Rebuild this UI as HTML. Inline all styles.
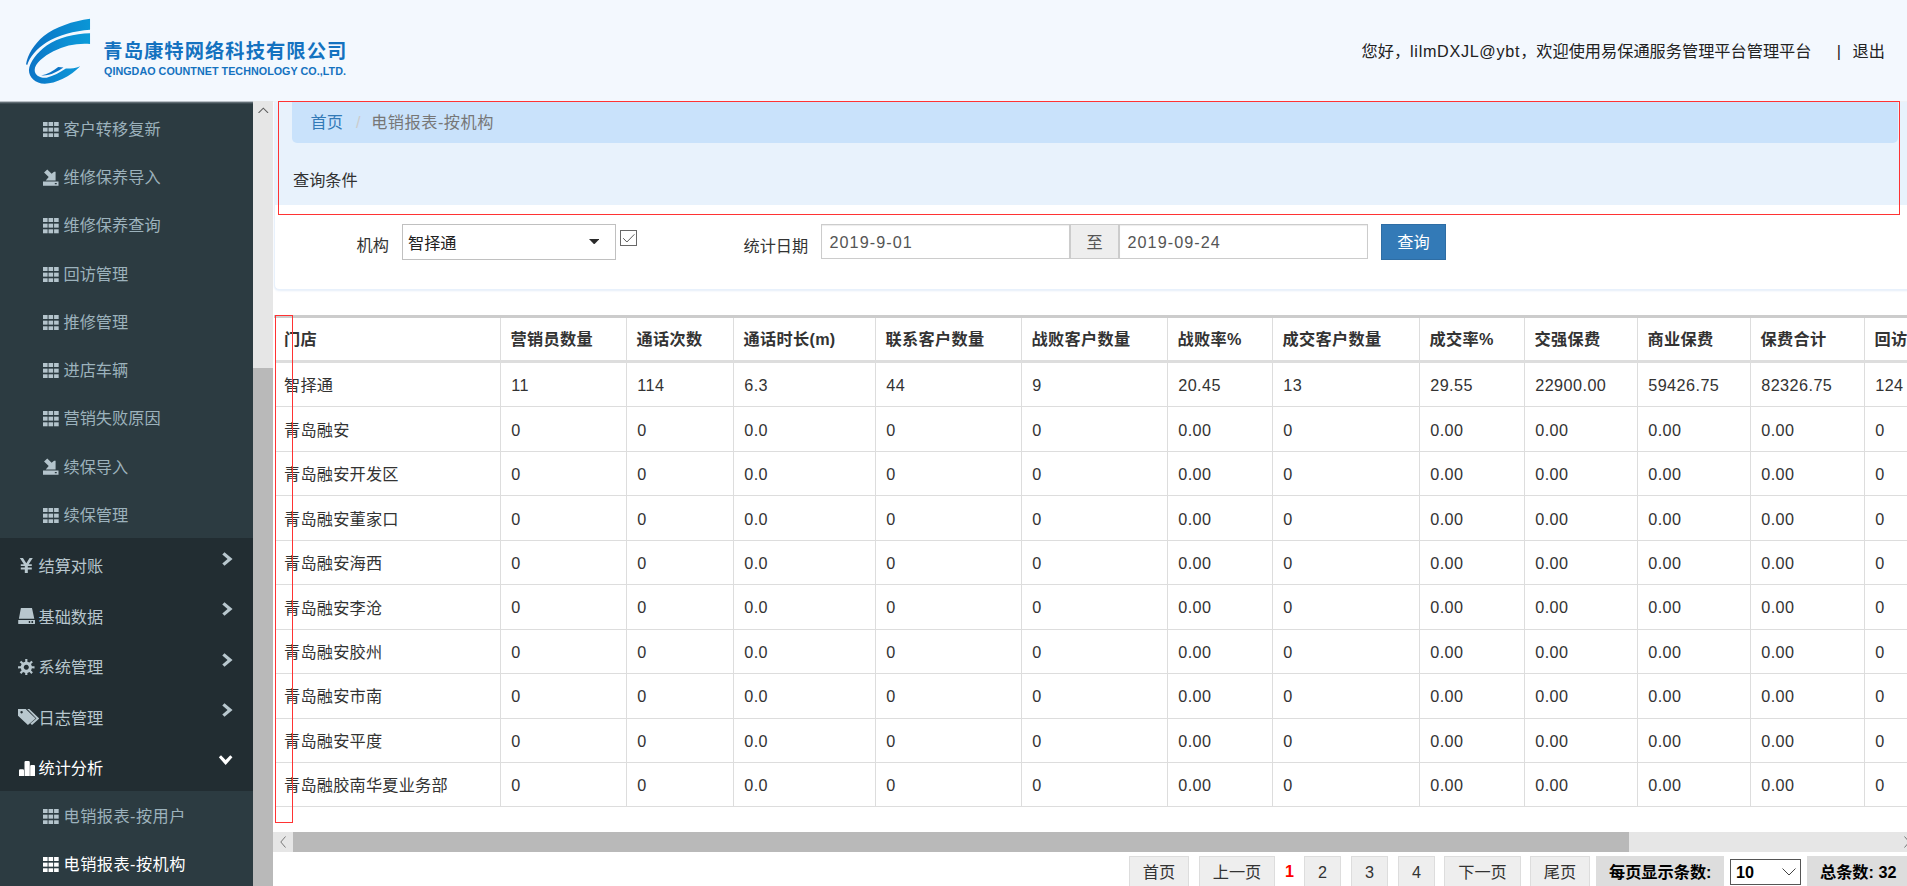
<!DOCTYPE html>
<html lang="zh-CN">
<head>
<meta charset="utf-8">
<title>电销报表-按机构</title>
<style>
*{box-sizing:border-box;margin:0;padding:0}
html,body{width:1907px;height:886px;overflow:hidden;background:#eef2f6;font-family:"Liberation Sans","Noto Sans CJK SC",sans-serif;font-size:16.2px;color:#333}
#hdr{position:absolute;left:0;top:0;width:1907px;height:101px;background:#f3f8fe;z-index:5}
#hdr .logo{position:absolute;left:15px;top:10px}
#hdr .cn{position:absolute;left:103.3px;top:38.2px;font-size:19.3px;font-weight:bold;color:#1472c0;letter-spacing:1.06px;line-height:28px;white-space:nowrap}
#hdr .en{position:absolute;left:104px;top:65.4px;font-size:10.75px;letter-spacing:.03px;font-weight:bold;color:#1472c0;line-height:12px;white-space:nowrap}
#hdr .usr{position:absolute;top:38.7px;font-size:16.2px;line-height:24px;color:#222;white-space:pre}
#side{position:absolute;left:0;top:101px;width:253px;height:785px;padding-top:1px;background:#222d32;overflow:hidden;}
#side .sub{height:48.25px;background:#2c3b41;color:#9cb2bc;font-size:16.2px;line-height:51px;padding-left:63.5px;position:relative;white-space:nowrap}
#side .sub .ic{position:absolute;left:43px;top:18px;color:#b4c4cc}
#side .sub.act .ic{color:#fff}
#side .top{height:50.55px;background:#222d32;color:#b8c7ce;font-size:16.2px;line-height:57.7px;padding-left:38.5px;position:relative;white-space:nowrap}
#side .top .ti,#side .top .ch{position:absolute}
#side .act{color:#fff}
#sbar{position:absolute;left:253px;top:100px;width:20px;height:786px;background:#e6e6e6}
#sbar .th{position:absolute;left:0;top:268px;width:20px;height:518px;background:#b9b9b9}
#sbar svg{position:absolute;left:5px;top:6.7px}
#main{position:absolute;left:273px;top:102px;width:1634px;height:784px;background:#fff;overflow:hidden}
#panel{position:absolute;left:1px;top:-4px;width:1640px;height:192px;background:#fff;border:1px solid #e8f1fc;border-radius:5px;box-shadow:0 1px 2px rgba(190,212,240,.4)}
#phead{position:absolute;left:1px;top:0;width:1633px;height:103px;background:#e8f2fc}
#bc{position:absolute;left:18px;top:0;width:1606px;height:41px;background:#c9e2fb;border-radius:0 0 5px 5px;font-size:16.2px;line-height:40px;padding-left:18.5px;white-space:nowrap}
#bc a{color:#337ab7;text-decoration:none}
#bc i{font-style:normal;color:#ccc;display:inline-block;width:28.3px;text-align:center;padding-left:2.6px}
#bc span{color:#777;letter-spacing:.5px}
#ptitle{position:absolute;left:19px;top:66px;line-height:24px;font-size:16.2px;color:#333}
.redbox{position:absolute;border:1px solid #f33;z-index:8}
.lbl{position:absolute;font-size:16.2px;line-height:24px;color:#333;white-space:nowrap}
#sel{position:absolute;left:129px;top:122px;width:214px;height:36px;border:1px solid #c0c0c0;background:#fff;font-size:16.2px;line-height:36px;padding-left:5px;color:#222}
#sel svg{position:absolute;left:186px;top:14px}
#cb{position:absolute;left:347px;top:128px;width:17px;height:16px;border:1px solid #686868;background:#fff}
#cb svg{position:absolute;left:1px;top:1px}
.inp{position:absolute;top:122px;height:35px;border:1px solid #ccc;background:#fff;box-shadow:inset 0 1px 1px rgba(0,0,0,.075);font-size:16.2px;line-height:35px;padding-left:7.5px;color:#555;letter-spacing:1.05px}
#addon{position:absolute;left:797px;top:122px;width:49px;height:35px;background:#eee;border:1px solid #ccc;text-align:center;line-height:35px;font-size:16.2px;color:#555}
#btn{position:absolute;left:1108px;top:122px;width:65px;height:36px;background:#337ab7;border:1px solid #2e6da4;color:#fff;font-size:16.2px;line-height:34px;text-align:center}
#tw{position:absolute;left:2px;top:213px;width:1632px;height:500px;overflow:hidden}
#tb{border-collapse:separate;border-spacing:0;table-layout:fixed;width:1715px;font-size:16.2px;color:#333;border-top:3px solid #ccc;border-left:1px solid #ddd}
#tb th,#tb td{border-right:1px solid #ddd;border-bottom:1px solid #ddd;padding:0 0 0 10.2px;text-align:left;white-space:nowrap;overflow:hidden;letter-spacing:.45px}
#tb th{height:45px;line-height:20px;padding-top:.5px;padding-left:9.5px;font-weight:bold;border-bottom:3px solid #ddd;letter-spacing:.3px}
#tb td{height:44.44px;line-height:20px;padding-top:1px}
#tb td.n{letter-spacing:.2px;padding-top:1.4px}
#tb th:first-child,#tb td:first-child{padding-left:8px}
#hs{position:absolute;left:0;top:730px;width:1634px;height:20px;background:#e6e6e6}
#hs .th{position:absolute;left:20px;top:0;width:1336px;height:20px;background:#b9b9b9}
#hs svg{position:absolute;top:4px}
#pg{position:absolute;left:0;top:754px;width:1634px;height:40px;font-size:16.2px}
#pg .b{position:absolute;top:0;height:34px;background:#eee;border:1px solid #ddd;text-align:center;line-height:30px;color:#333}
#pg .g{position:absolute;top:0;height:34px;background:#ddd;font-weight:bold;color:#000;line-height:32px;white-space:nowrap}
#pg .cur{position:absolute;top:0;line-height:30px;color:#f00;font-weight:bold}
#pg .s{position:absolute;left:1457px;top:3px;width:71px;height:26px;border:1px solid #555;background:#fff;font-weight:bold;color:#000;line-height:24px;padding-left:5px}
#pg .s svg{position:absolute;right:3.7px;top:8px}
</style>
</head>
<body>
<div id="hdr">
  <svg class="logo" width="100" height="85" viewBox="0 0 1042 886">
    <defs>
      <linearGradient id="lg1" x1="0" y1="0" x2="1" y2="0"><stop offset="0" stop-color="#0b6fc2"/><stop offset=".55" stop-color="#0a86cf"/><stop offset="1" stop-color="#0a96d6"/></linearGradient>
      <linearGradient id="lg2" x1="0" y1="0" x2="1" y2="0"><stop offset="0" stop-color="#0b74c6"/><stop offset=".6" stop-color="#0c8fd4"/><stop offset="1" stop-color="#0a9bd9"/></linearGradient>
    </defs>
    <path fill="url(#lg1)" d="M782,92 C600,115 420,180 300,270 C200,350 130,470 115,565 L127,574 C150,490 230,400 330,335 C450,265 620,215 782,205 Z"/>
    <path fill="url(#lg2)" d="M782,243 C620,245 450,290 330,370 C230,440 150,550 145,625 C145,700 210,768 310,768 C420,768 580,690 680,586 C620,610 560,612 530,610 C470,650 400,690 330,705 C260,712 205,680 205,625 C205,560 300,480 400,430 C520,370 650,345 782,355 Z"/>
    <path fill="#0b74c6" d="M272,683 C340,665 400,635 450,593 L505,600 C450,640 360,692 272,683 Z"/>
  </svg>
  <div class="cn">青岛康特网络科技有限公司</div>
  <div class="en">QINGDAO COUNTNET TECHNOLOGY CO.,LTD.</div>
  <div class="usr" style="right:95.5px">您好，<span style="letter-spacing:.68px">lilmDXJL@ybt</span>，欢迎使用易保通服务管理平台管理平台</div>
  <div class="usr" style="left:1836.7px">|</div>
  <div class="usr" style="left:1852.5px">退出</div>
</div>
<div id="side">
  <div class="sub" style="height:50px;line-height:55px"><svg class="ic" style="top:19.5px" width="15.7" height="15.3" viewBox="0 0 15.7 15.3"><g fill="currentColor"><rect x="0" y="0" width="4.6" height="4"/><rect x="5.55" y="0" width="4.6" height="4"/><rect x="11.1" y="0" width="4.6" height="4"/><rect x="0" y="5.65" width="4.6" height="4"/><rect x="5.55" y="5.65" width="4.6" height="4"/><rect x="11.1" y="5.65" width="4.6" height="4"/><rect x="0" y="11.3" width="4.6" height="4"/><rect x="5.55" y="11.3" width="4.6" height="4"/><rect x="11.1" y="11.3" width="4.6" height="4"/></g></svg>客户转移复新</div>
  <div class="sub"><svg class="ic" style="top:16.7px" width="15.5" height="17" viewBox="0 0 16 17"><g fill="currentColor"><path d="M0,12.7 H16 V17 H0 Z M12.2,14.2 h2 v1.2 h-2 z" fill-rule="evenodd"/><path d="M13,2.6 V11.7 H2.8 L5.9,8 L1.1,3.4 L4.4,0.2 L8.9,4.6 L11.4,2.6 Z"/></g></svg>维修保养导入</div>
  <div class="sub"><svg class="ic" width="15.7" height="15.3" viewBox="0 0 15.7 15.3"><g fill="currentColor"><rect x="0" y="0" width="4.6" height="4"/><rect x="5.55" y="0" width="4.6" height="4"/><rect x="11.1" y="0" width="4.6" height="4"/><rect x="0" y="5.65" width="4.6" height="4"/><rect x="5.55" y="5.65" width="4.6" height="4"/><rect x="11.1" y="5.65" width="4.6" height="4"/><rect x="0" y="11.3" width="4.6" height="4"/><rect x="5.55" y="11.3" width="4.6" height="4"/><rect x="11.1" y="11.3" width="4.6" height="4"/></g></svg>维修保养查询</div>
  <div class="sub"><svg class="ic" width="15.7" height="15.3" viewBox="0 0 15.7 15.3"><g fill="currentColor"><rect x="0" y="0" width="4.6" height="4"/><rect x="5.55" y="0" width="4.6" height="4"/><rect x="11.1" y="0" width="4.6" height="4"/><rect x="0" y="5.65" width="4.6" height="4"/><rect x="5.55" y="5.65" width="4.6" height="4"/><rect x="11.1" y="5.65" width="4.6" height="4"/><rect x="0" y="11.3" width="4.6" height="4"/><rect x="5.55" y="11.3" width="4.6" height="4"/><rect x="11.1" y="11.3" width="4.6" height="4"/></g></svg>回访管理</div>
  <div class="sub"><svg class="ic" width="15.7" height="15.3" viewBox="0 0 15.7 15.3"><g fill="currentColor"><rect x="0" y="0" width="4.6" height="4"/><rect x="5.55" y="0" width="4.6" height="4"/><rect x="11.1" y="0" width="4.6" height="4"/><rect x="0" y="5.65" width="4.6" height="4"/><rect x="5.55" y="5.65" width="4.6" height="4"/><rect x="11.1" y="5.65" width="4.6" height="4"/><rect x="0" y="11.3" width="4.6" height="4"/><rect x="5.55" y="11.3" width="4.6" height="4"/><rect x="11.1" y="11.3" width="4.6" height="4"/></g></svg>推修管理</div>
  <div class="sub"><svg class="ic" width="15.7" height="15.3" viewBox="0 0 15.7 15.3"><g fill="currentColor"><rect x="0" y="0" width="4.6" height="4"/><rect x="5.55" y="0" width="4.6" height="4"/><rect x="11.1" y="0" width="4.6" height="4"/><rect x="0" y="5.65" width="4.6" height="4"/><rect x="5.55" y="5.65" width="4.6" height="4"/><rect x="11.1" y="5.65" width="4.6" height="4"/><rect x="0" y="11.3" width="4.6" height="4"/><rect x="5.55" y="11.3" width="4.6" height="4"/><rect x="11.1" y="11.3" width="4.6" height="4"/></g></svg>进店车辆</div>
  <div class="sub"><svg class="ic" width="15.7" height="15.3" viewBox="0 0 15.7 15.3"><g fill="currentColor"><rect x="0" y="0" width="4.6" height="4"/><rect x="5.55" y="0" width="4.6" height="4"/><rect x="11.1" y="0" width="4.6" height="4"/><rect x="0" y="5.65" width="4.6" height="4"/><rect x="5.55" y="5.65" width="4.6" height="4"/><rect x="11.1" y="5.65" width="4.6" height="4"/><rect x="0" y="11.3" width="4.6" height="4"/><rect x="5.55" y="11.3" width="4.6" height="4"/><rect x="11.1" y="11.3" width="4.6" height="4"/></g></svg>营销失败原因</div>
  <div class="sub"><svg class="ic" style="top:16.7px" width="15.5" height="17" viewBox="0 0 16 17"><g fill="currentColor"><path d="M0,12.7 H16 V17 H0 Z M12.2,14.2 h2 v1.2 h-2 z" fill-rule="evenodd"/><path d="M13,2.6 V11.7 H2.8 L5.9,8 L1.1,3.4 L4.4,0.2 L8.9,4.6 L11.4,2.6 Z"/></g></svg>续保导入</div>
  <div class="sub"><svg class="ic" width="15.7" height="15.3" viewBox="0 0 15.7 15.3"><g fill="currentColor"><rect x="0" y="0" width="4.6" height="4"/><rect x="5.55" y="0" width="4.6" height="4"/><rect x="11.1" y="0" width="4.6" height="4"/><rect x="0" y="5.65" width="4.6" height="4"/><rect x="5.55" y="5.65" width="4.6" height="4"/><rect x="11.1" y="5.65" width="4.6" height="4"/><rect x="0" y="11.3" width="4.6" height="4"/><rect x="5.55" y="11.3" width="4.6" height="4"/><rect x="11.1" y="11.3" width="4.6" height="4"/></g></svg>续保管理</div>
  <div class="top"><svg class="ti" style="left:19px;top:19.9px" width="14.6" height="15" viewBox="0 0 13 15"><path fill="currentColor" d="M0,0 H3.2 L6.5,5.2 L9.8,0 H13 L8.9,6.3 H12 V8.1 H8 V9.6 H12 V11.4 H8 V15 H5 V11.4 H1 V9.6 H5 V8.1 H1 V6.3 H4.1 Z"/></svg>结算对账<svg class="ch" style="left:221.5px;top:13.6px" width="11.5" height="14" viewBox="0 0 12 14"><path fill="currentColor" d="M2.6,0 L11,7 L2.6,14 L0.3,11.6 L5.8,7 L0.3,2.4 Z"/></svg></div>
  <div class="top"><svg class="ti" style="left:17.9px;top:19.3px" width="17.2" height="16.3" viewBox="0 0 17.2 16.3"><path fill="currentColor" fill-rule="evenodd" d="M2.9,0 H14 L16.3,10.8 H0.9 Z M0.2,12 H17 V15.3 Q17,16.3 16,16.3 H1.2 Q0.2,16.3 0.2,15.3 Z M10.8,13.1 h1.4 v1.8 h-1.4 z M13.5,13.1 h1.6 v1.8 h-1.6 z"/></svg>基础数据<svg class="ch" style="left:221.5px;top:13.6px" width="11.5" height="14" viewBox="0 0 12 14"><path fill="currentColor" d="M2.6,0 L11,7 L2.6,14 L0.3,11.6 L5.8,7 L0.3,2.4 Z"/></svg></div>
  <div class="top"><svg class="ti" style="left:18.15px;top:19.5px" width="16.6" height="16.6" viewBox="0 0 16.6 16.6"><path fill="currentColor" fill-rule="evenodd" d="M16.53,7.20 L16.53,9.40 L13.90,9.37 L13.01,11.50 L14.90,13.34 L13.34,14.90 L11.50,13.01 L9.37,13.90 L9.40,16.53 L7.20,16.53 L7.23,13.90 L5.10,13.01 L3.26,14.90 L1.70,13.34 L3.59,11.50 L2.70,9.37 L0.07,9.40 L0.07,7.20 L2.70,7.23 L3.59,5.10 L1.70,3.26 L3.26,1.70 L5.10,3.59 L7.23,2.70 L7.20,0.07 L9.40,0.07 L9.37,2.70 L11.50,3.59 L13.34,1.70 L14.90,3.26 L13.01,5.10 L13.90,7.23 Z M8.3,5.8 a2.5,2.5 0 1,0 0.01,0 Z"/></svg>系统管理<svg class="ch" style="left:221.5px;top:13.6px" width="11.5" height="14" viewBox="0 0 12 14"><path fill="currentColor" d="M2.6,0 L11,7 L2.6,14 L0.3,11.6 L5.8,7 L0.3,2.4 Z"/></svg></div>
  <div class="top"><svg class="ti" style="left:17.9px;top:19.3px" width="21.2" height="16" viewBox="0 0 21.2 16"><path fill="currentColor" fill-rule="evenodd" d="M0,0 H7.7 L17.6,9.5 L9.9,16 L0,6.8 Z M3.6,2 a1.2,1.2 0 1,0 0.01,0 Z M9.2,0 H11.3 L21.2,9.5 L14,16 L12.4,14.6 L18.4,9.5 Z"/></svg>日志管理<svg class="ch" style="left:221.5px;top:13.6px" width="11.5" height="14" viewBox="0 0 12 14"><path fill="currentColor" d="M2.6,0 L11,7 L2.6,14 L0.3,11.6 L5.8,7 L0.3,2.4 Z"/></svg></div>
  <div class="top act"><svg class="ti" style="left:19px;top:20.5px" width="16.2" height="15.4" viewBox="0 0 16.2 15.4"><path fill="currentColor" d="M0,9.4 Q0,8.2 1.2,8.2 H3.8 Q5,8.2 5,9.4 V15.4 H0 Z M5.5,1.2 Q5.5,0 6.7,0 H9.6 Q10.8,0 10.8,1.2 V15.4 H5.5 Z M11.2,5.3 Q11.2,4.1 12.4,4.1 H15 Q16.2,4.1 16.2,5.3 V15.4 H11.2 Z"/></svg>统计分析<svg class="ch" style="left:218px;top:15.3px" width="15.3" height="10" viewBox="0 0 15 11"><path fill="currentColor" d="M0,2.6 L7.5,11 L15,2.6 L12.6,0.3 L7.5,5.6 L2.4,0.3 Z"/></svg></div>
  <div class="sub" style="letter-spacing:.45px"><svg class="ic" width="15.7" height="15.3" viewBox="0 0 15.7 15.3"><g fill="currentColor"><rect x="0" y="0" width="4.6" height="4"/><rect x="5.55" y="0" width="4.6" height="4"/><rect x="11.1" y="0" width="4.6" height="4"/><rect x="0" y="5.65" width="4.6" height="4"/><rect x="5.55" y="5.65" width="4.6" height="4"/><rect x="11.1" y="5.65" width="4.6" height="4"/><rect x="0" y="11.3" width="4.6" height="4"/><rect x="5.55" y="11.3" width="4.6" height="4"/><rect x="11.1" y="11.3" width="4.6" height="4"/></g></svg>电销报表-按用户</div>
  <div class="sub act" style="letter-spacing:.45px"><svg class="ic" width="15.7" height="15.3" viewBox="0 0 15.7 15.3"><g fill="currentColor"><rect x="0" y="0" width="4.6" height="4"/><rect x="5.55" y="0" width="4.6" height="4"/><rect x="11.1" y="0" width="4.6" height="4"/><rect x="0" y="5.65" width="4.6" height="4"/><rect x="5.55" y="5.65" width="4.6" height="4"/><rect x="11.1" y="5.65" width="4.6" height="4"/><rect x="0" y="11.3" width="4.6" height="4"/><rect x="5.55" y="11.3" width="4.6" height="4"/><rect x="11.1" y="11.3" width="4.6" height="4"/></g></svg>电销报表-按机构</div>
</div>
<div id="sbar"><svg width="10.6" height="6.6" viewBox="0 0 10 6"><path d="M0.5,5.5 L5,1 L9.5,5.5" fill="none" stroke="#606060" stroke-width="1"/></svg><div class="th"></div></div>
<div id="main">
  <div id="panel"></div>
  <div id="phead">
    <div id="bc"><a>首页</a><i>/</i><span>电销报表-按机构</span></div>
    <div id="ptitle">查询条件</div>
  </div>
  <div class="lbl" style="left:83.5px;top:131.3px">机构</div>
  <div id="sel">智择通<svg width="10.4" height="5.4" viewBox="0 0 10.4 5.4"><path d="M0,0 H10.4 L5.2,5.4 Z" fill="#2a2a2a"/></svg></div>
  <div id="cb"><svg width="15" height="14" viewBox="0 0 15 14"><path d="M1.2,6.2 L4.9,10 L12.4,2.3" fill="none" stroke="#5a5a5a" stroke-width="1"/></svg></div>
  <div class="lbl" style="left:470.5px;top:132.3px">统计日期</div>
  <div class="inp" style="left:548px;width:249px">2019-9-01</div>
  <div id="addon">至</div>
  <div class="inp" style="left:846px;width:249px">2019-09-24</div>
  <div id="btn">查询</div>
  <div style="position:absolute;left:0.5px;top:213px;width:2px;height:3px;background:#ccc"></div>
  <div id="tw">
<table id="tb"><colgroup><col style="width:225px"><col style="width:126px"><col style="width:107px"><col style="width:142px"><col style="width:146px"><col style="width:146px"><col style="width:105px"><col style="width:147px"><col style="width:105px"><col style="width:113px"><col style="width:113px"><col style="width:114px"><col style="width:126px"></colgroup>
<thead><tr><th>门店</th><th>营销员数量</th><th>通话次数</th><th>通话时长(m)</th><th>联系客户数量</th><th>战败客户数量</th><th>战败率%</th><th>成交客户数量</th><th>成交率%</th><th>交强保费</th><th>商业保费</th><th>保费合计</th><th>回访数量</th></tr></thead>
<tbody>
<tr><td class="n">智择通</td><td>11</td><td>114</td><td>6.3</td><td>44</td><td>9</td><td>20.45</td><td>13</td><td>29.55</td><td>22900.00</td><td>59426.75</td><td>82326.75</td><td>124</td></tr>
<tr><td class="n">青岛融安</td><td>0</td><td>0</td><td>0.0</td><td>0</td><td>0</td><td>0.00</td><td>0</td><td>0.00</td><td>0.00</td><td>0.00</td><td>0.00</td><td>0</td></tr>
<tr><td class="n">青岛融安开发区</td><td>0</td><td>0</td><td>0.0</td><td>0</td><td>0</td><td>0.00</td><td>0</td><td>0.00</td><td>0.00</td><td>0.00</td><td>0.00</td><td>0</td></tr>
<tr><td class="n">青岛融安董家口</td><td>0</td><td>0</td><td>0.0</td><td>0</td><td>0</td><td>0.00</td><td>0</td><td>0.00</td><td>0.00</td><td>0.00</td><td>0.00</td><td>0</td></tr>
<tr><td class="n">青岛融安海西</td><td>0</td><td>0</td><td>0.0</td><td>0</td><td>0</td><td>0.00</td><td>0</td><td>0.00</td><td>0.00</td><td>0.00</td><td>0.00</td><td>0</td></tr>
<tr><td class="n">青岛融安李沧</td><td>0</td><td>0</td><td>0.0</td><td>0</td><td>0</td><td>0.00</td><td>0</td><td>0.00</td><td>0.00</td><td>0.00</td><td>0.00</td><td>0</td></tr>
<tr><td class="n">青岛融安胶州</td><td>0</td><td>0</td><td>0.0</td><td>0</td><td>0</td><td>0.00</td><td>0</td><td>0.00</td><td>0.00</td><td>0.00</td><td>0.00</td><td>0</td></tr>
<tr><td class="n">青岛融安市南</td><td>0</td><td>0</td><td>0.0</td><td>0</td><td>0</td><td>0.00</td><td>0</td><td>0.00</td><td>0.00</td><td>0.00</td><td>0.00</td><td>0</td></tr>
<tr><td class="n">青岛融安平度</td><td>0</td><td>0</td><td>0.0</td><td>0</td><td>0</td><td>0.00</td><td>0</td><td>0.00</td><td>0.00</td><td>0.00</td><td>0.00</td><td>0</td></tr>
<tr><td class="n">青岛融胶南华夏业务部</td><td>0</td><td>0</td><td>0.0</td><td>0</td><td>0</td><td>0.00</td><td>0</td><td>0.00</td><td>0.00</td><td>0.00</td><td>0.00</td><td>0</td></tr>
</tbody></table>
  </div>
  <div id="hs"><svg style="left:7px" width="6" height="12" viewBox="0 0 6 12"><path d="M5.5,0.5 L0.8,6 L5.5,11.5" fill="none" stroke="#777" stroke-width="1"/></svg><div class="th"></div><svg style="left:1631px" width="6" height="12" viewBox="0 0 6 12"><path d="M0.5,0.5 L5.2,6 L0.5,11.5" fill="none" stroke="#777" stroke-width="1"/></svg></div>
  <div id="pg">
    <div class="b" style="left:856px;width:60px">首页</div>
    <div class="b" style="left:926px;width:76px">上一页</div>
    <div class="cur" style="left:1012px">1</div>
    <div class="b" style="left:1031px;width:37px">2</div>
    <div class="b" style="left:1078px;width:37px">3</div>
    <div class="b" style="left:1125px;width:37px">4</div>
    <div class="b" style="left:1171px;width:77px">下一页</div>
    <div class="b" style="left:1257px;width:60px">尾页</div>
    <div class="g" style="left:1323px;width:128px;padding-left:13px">每页显示条数:</div>
    <div class="s">10<svg width="14" height="8" viewBox="0 0 14 8"><path d="M0.5,0.5 L7,7 L13.5,0.5" fill="none" stroke="#444" stroke-width="1"/></svg></div>
    <div class="g" style="left:1534px;width:100px;padding-left:13px">总条数: 32</div>
  </div>
</div>
<div class="redbox" style="left:278px;top:101px;width:1622px;height:114px"></div>
<div class="redbox" style="left:275px;top:315px;width:18px;height:508px"></div>
<div style="position:absolute;left:0;top:101px;width:253px;height:3px;z-index:6;background:linear-gradient(rgba(235,240,246,1),rgba(140,150,158,.6) 45%,rgba(44,59,65,0))"></div>
</body>
</html>
